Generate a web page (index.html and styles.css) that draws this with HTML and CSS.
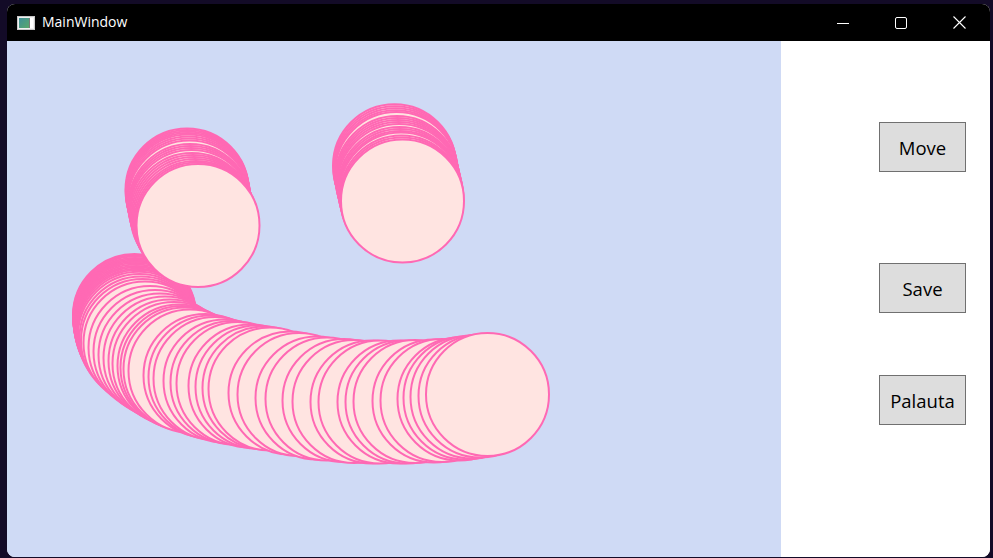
FILE: index.html
```html
<!DOCTYPE html>
<html>
<head>
<meta charset="utf-8">
<title>MainWindow</title>
<link rel="stylesheet" href="styles.css">
</head>
<body>
<div class="window">
  <div class="titlebar">
    <svg class="app-icon" width="18" height="14" viewBox="0 0 18 14">
      <defs>
        <linearGradient id="ig" x1="0" y1="0" x2="1" y2="1">
          <stop offset="0" stop-color="#3f8f9a"/>
          <stop offset="1" stop-color="#5aa86a"/>
        </linearGradient>
      </defs>
      <rect x="0.5" y="0.5" width="17" height="13" fill="#f0f0f0" stroke="#c8c8c8"/>
      <rect x="2" y="2" width="10" height="10" fill="url(#ig)"/>
      <rect x="13" y="2" width="3" height="10" fill="#ffffff"/>
      <rect x="12" y="2" width="1" height="10" fill="#7a7a7a"/>
    </svg>
    <span class="title">MainWindow</span>
    <div class="controls">
      <div class="ctrl">
        <svg width="12" height="12" viewBox="0 0 12 12"><path d="M0 6.5H12" stroke="#fff" stroke-width="1"/></svg>
      </div>
      <div class="ctrl">
        <svg width="12" height="12" viewBox="0 0 12 12"><rect x="0.5" y="0.5" width="11" height="11" rx="1.5" fill="none" stroke="#fff" stroke-width="1"/></svg>
      </div>
      <div class="ctrl">
        <svg width="13" height="13" viewBox="0 0 13 13"><path d="M0.5 0.5L12.5 12.5M12.5 0.5L0.5 12.5" stroke="#fff" stroke-width="1.1"/></svg>
      </div>
    </div>
  </div>
  <div class="client">
    <div class="canvas">
      <svg width="774" height="512" viewBox="7 41 774 512">
        <g fill="#FFE4E1" stroke="#FF69B4" stroke-width="2">
          <circle cx="134.5" cy="315.5" r="61.5"/>
          <circle cx="134.6" cy="316.8" r="61.5"/>
          <circle cx="134.7" cy="318.1" r="61.5"/>
          <circle cx="134.9" cy="319.4" r="61.5"/>
          <circle cx="135.1" cy="320.7" r="61.5"/>
          <circle cx="135.3" cy="322" r="61.5"/>
          <circle cx="135.5" cy="323.3" r="61.5"/>
          <circle cx="135.8" cy="324.6" r="61.5"/>
          <circle cx="136.1" cy="326" r="61.5"/>
          <circle cx="136.5" cy="327.4" r="61.5"/>
          <circle cx="137" cy="328.8" r="61.5"/>
          <circle cx="137.5" cy="330.2" r="61.5"/>
          <circle cx="138.1" cy="331.6" r="61.5"/>
          <circle cx="138.8" cy="333.2" r="61.5"/>
          <circle cx="139.5" cy="335.5" r="61.5"/>
          <circle cx="141" cy="338" r="61.5"/>
          <circle cx="142.5" cy="340.5" r="61.5"/>
          <circle cx="145" cy="343" r="61.5"/>
          <circle cx="150" cy="347.5" r="61.5"/>
          <circle cx="155" cy="351.5" r="61.5"/>
          <circle cx="160" cy="355" r="61.5"/>
          <circle cx="165" cy="358" r="61.5"/>
          <circle cx="170" cy="361" r="61.5"/>
          <circle cx="174" cy="363.5" r="61.5"/>
          <circle cx="179" cy="366" r="61.5"/>
          <circle cx="182" cy="367.5" r="61.5"/>
          <circle cx="185" cy="369" r="61.5"/>
          <circle cx="190" cy="371" r="61.5"/>
          <circle cx="205" cy="375.5" r="61.5"/>
          <circle cx="210" cy="377" r="61.5"/>
          <circle cx="215" cy="378.5" r="61.5"/>
          <circle cx="225" cy="381" r="61.5"/>
          <circle cx="232" cy="382.5" r="61.5"/>
          <circle cx="238" cy="383.5" r="61.5"/>
          <circle cx="250" cy="386" r="61.5"/>
          <circle cx="257" cy="387" r="61.5"/>
          <circle cx="264" cy="388" r="61.5"/>
          <circle cx="270" cy="389" r="61.5"/>
          <circle cx="290" cy="393" r="61.5"/>
          <circle cx="299" cy="394.5" r="61.5"/>
          <circle cx="317" cy="398" r="61.5"/>
          <circle cx="327" cy="399" r="61.5"/>
          <circle cx="344" cy="400.5" r="61.5"/>
          <circle cx="354" cy="401.5" r="61.5"/>
          <circle cx="372" cy="402" r="61.5"/>
          <circle cx="380" cy="402" r="61.5"/>
          <circle cx="399" cy="402" r="61.5"/>
          <circle cx="407" cy="402" r="61.5"/>
          <circle cx="415" cy="401.5" r="61.5"/>
          <circle cx="434" cy="401" r="61.5"/>
          <circle cx="442" cy="400.5" r="61.5"/>
          <circle cx="459" cy="399" r="61.5"/>
          <circle cx="465" cy="398" r="61.5"/>
          <circle cx="472" cy="397" r="61.5"/>
          <circle cx="480" cy="396" r="61.5"/>
          <circle cx="487.5" cy="394.5" r="61.5"/>

          <circle cx="187" cy="190" r="61.5"/>
          <circle cx="187.3" cy="191.5" r="61.5"/>
          <circle cx="187.6" cy="193" r="61.5"/>
          <circle cx="187.9" cy="194.5" r="61.5"/>
          <circle cx="188.2" cy="196" r="61.5"/>
          <circle cx="188.6" cy="198" r="61.5"/>
          <circle cx="189" cy="200" r="61.5"/>
          <circle cx="189.4" cy="202" r="61.5"/>
          <circle cx="190" cy="205.5" r="61.5"/>
          <circle cx="190.5" cy="207.5" r="61.5"/>
          <circle cx="191" cy="209.5" r="61.5"/>
          <circle cx="191.5" cy="211.5" r="61.5"/>
          <circle cx="192" cy="214.5" r="61.5"/>
          <circle cx="193" cy="216.5" r="61.5"/>
          <circle cx="194" cy="218.5" r="61.5"/>
          <circle cx="195" cy="220.5" r="61.5"/>
          <circle cx="196" cy="222.5" r="61.5"/>
          <circle cx="197" cy="224" r="61.5"/>
          <circle cx="198" cy="225.5" r="61.5"/>

          <circle cx="394.5" cy="165.8" r="61.5"/>
          <circle cx="395" cy="167.8" r="61.5"/>
          <circle cx="395.5" cy="169.8" r="61.5"/>
          <circle cx="396" cy="171.8" r="61.5"/>
          <circle cx="396.5" cy="173.5" r="61.5"/>
          <circle cx="397" cy="177.5" r="61.5"/>
          <circle cx="397.5" cy="179.5" r="61.5"/>
          <circle cx="398" cy="181.5" r="61.5"/>
          <circle cx="398.5" cy="183.5" r="61.5"/>
          <circle cx="399" cy="185.5" r="61.5"/>
          <circle cx="399.5" cy="188.5" r="61.5"/>
          <circle cx="400" cy="190.5" r="61.5"/>
          <circle cx="400.5" cy="192.5" r="61.5"/>
          <circle cx="401" cy="194" r="61.5"/>
          <circle cx="401.5" cy="197" r="61.5"/>
          <circle cx="402" cy="199" r="61.5"/>
          <circle cx="402.5" cy="201" r="61.5"/>
        </g>
      </svg>
    </div>
    <div class="panel">
      <button class="btn btn-move">Move</button>
      <button class="btn btn-save">Save</button>
      <button class="btn btn-palauta">Palauta</button>
    </div>
  </div>
</div>
</body>
</html>
```
FILE: styles.css
```css
html, body {
  margin: 0;
  padding: 0;
}
body {
  width: 993px;
  height: 558px;
  overflow: hidden;
  background: #130b27;
  font-family: "Open Sans", "Noto Sans", sans-serif;
}
.window {
  margin: 4px 0 0 7px;
  width: 983px;
  height: 553px;
  border-radius: 8px;
  overflow: hidden;
  display: flex;
  flex-direction: column;
  background: #ffffff;
}
.titlebar {
  height: 37px;
  flex: none;
  background: #000000;
  color: #ffffff;
  display: flex;
  align-items: center;
}
.app-icon {
  margin-left: 10px;
  display: block;
}
.title {
  margin-left: 7px;
  font-size: 14px;
  line-height: 1;
  margin-top: -1px;
}
.controls {
  margin-left: auto;
  margin-right: 2px;
  display: flex;
  height: 100%;
}
.ctrl {
  width: 58px;
  display: flex;
  align-items: center;
  justify-content: center;
}
.ctrl svg {
  display: block;
}
.client {
  flex: 1;
  display: flex;
  min-height: 0;
}
.canvas {
  width: 774px;
  flex: none;
  background: #cfdaf5;
  overflow: hidden;
}
.canvas svg {
  display: block;
}
.panel {
  flex: 1;
  display: flex;
  flex-direction: column;
  align-items: flex-start;
  padding: 81px 0 0 98px;
  background: #ffffff;
}
.btn {
  width: 87px;
  height: 50px;
  padding: 0;
  margin: 0;
  background: #dddddd;
  border: 1px solid #707070;
  border-radius: 0;
  color: #000000;
  font-family: "Open Sans", "Noto Sans", sans-serif;
  font-size: 18.5px;
}
.btn-move {
  margin-bottom: 91px;
}
.btn-save {
  margin-bottom: 62px;
}
```
